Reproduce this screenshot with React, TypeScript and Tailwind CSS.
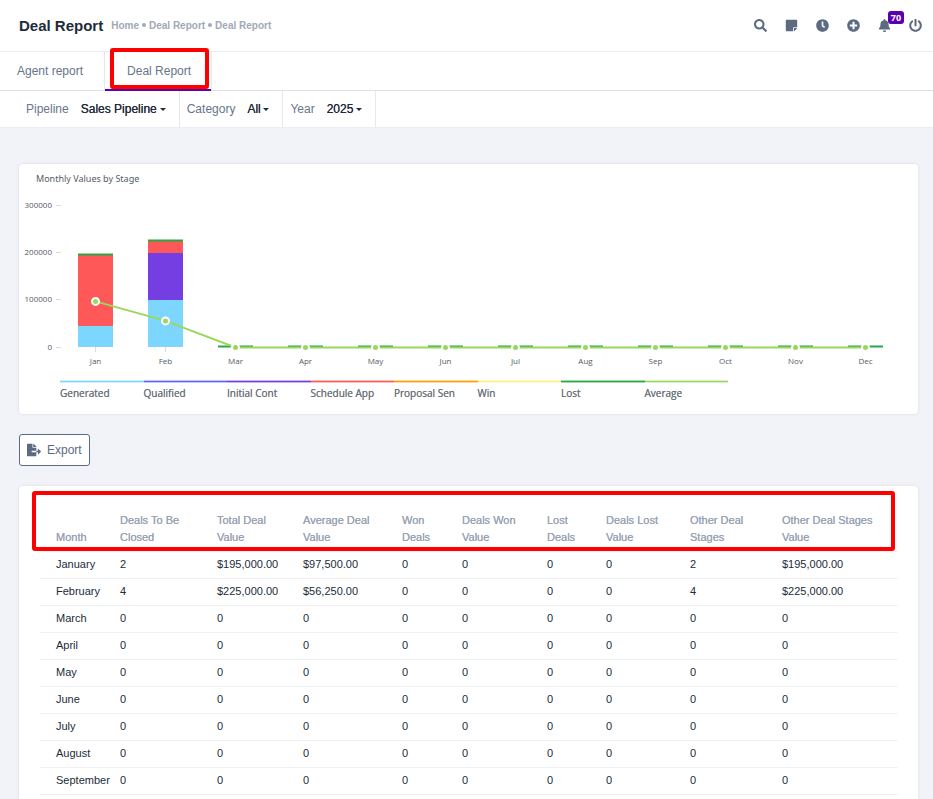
import React from "react";
import {
  FaSearch,
  FaStickyNote,
  FaClock,
  FaPlusCircle,
  FaBell,
  FaPowerOff,
  FaFileExport,
} from "react-icons/fa";

const months = ["Jan", "Feb", "Mar", "Apr", "May", "Jun", "Jul", "Aug", "Sep", "Oct", "Nov", "Dec"];
const averages = [97500, 56250, 0, 0, 0, 0, 0, 0, 0, 0, 0, 0];

const legend = [
  { name: "Generated", line: "bg-[#7cd6fd] border-[#d0f0fe]" },
  { name: "Qualified", line: "bg-[#5e64ff] border-[#c2c4ff]" },
  { name: "Initial Cont", line: "bg-[#743ee2] border-[#cab5f4]" },
  { name: "Schedule App", line: "bg-[#ff5858] border-[#ffc0c0]" },
  { name: "Proposal Sen", line: "bg-[#ffa00a] border-[#ffdba0]" },
  { name: "Win", line: "bg-[#feef72] border-[#fffad0]" },
  { name: "Lost", line: "bg-[#28a745] border-[#a6dab2]" },
  { name: "Average", line: "bg-[#98d85b] border-[#d9f1c4]" },
];

const headings = [
  ["", "Month"],
  ["Deals To Be", "Closed"],
  ["Total Deal", "Value"],
  ["Average Deal", "Value"],
  ["Won", "Deals"],
  ["Deals Won", "Value"],
  ["Lost", "Deals"],
  ["Deals Lost", "Value"],
  ["Other Deal", "Stages"],
  ["Other Deal Stages", "Value"],
];

const zeros = ["0", "0", "0", "0", "0", "0", "0", "0", "0"];
const rows = [
  ["January", "2", "$195,000.00", "$97,500.00", "0", "0", "0", "0", "2", "$195,000.00"],
  ["February", "4", "$225,000.00", "$56,250.00", "0", "0", "0", "0", "4", "$225,000.00"],
  ["March", ...zeros],
  ["April", ...zeros],
  ["May", ...zeros],
  ["June", ...zeros],
  ["July", ...zeros],
  ["August", ...zeros],
  ["September", ...zeros],
];

function Filter({ id, label, value, lead }: { id: string; label: string; value: string; lead: string }) {
  return (
    <div className={`flex items-center border-r border-[#e6e8f0] pr-[13px] ${lead}`}>
      <label htmlFor={id} className="mr-3 text-[#67758d]">
        {label}
      </label>
      <select
        id={id}
        className="appearance-none bg-transparent text-[#212b3a] outline-none [text-shadow:0_0_0_currentColor]"
      >
        <option>{value}</option>
      </select>
      <svg className="pointer-events-none ml-[2px] h-[3px] w-[6px]" viewBox="0 0 6 3" aria-hidden="true">
        <path d="M0 0h6L3 3z" fill="#212b3a" />
      </svg>
    </div>
  );
}

function Chart() {
  const x = (i: number) => 95.5 + i * 70;
  const y = (v: number) => 347.5 - (v / 100000) * 47.3;
  return (
    <svg viewBox="19 194 899 176" className="block w-full" role="img" aria-label="Monthly values by stage">
      {[0, 100000, 200000, 300000].map((v) => (
        <g key={v}>
          <line x1="56" x2="61" y1={Math.round(y(v)) - 0.5} y2={Math.round(y(v)) - 0.5} stroke="#dadada" />
          <text x="52" y={Math.round(y(v)) + 2} fontSize="8" textAnchor="end" fill="#555b66">
            {v}
          </text>
        </g>
      ))}
      {months.map((m, i) => (
        <g key={m}>
          <line x1={x(i)} x2={x(i)} y1="347" y2="352" stroke="#dadada" />
          <text x={x(i)} y="364" fontSize="8" textAnchor="middle" fill="#555b66">
            {m}
          </text>
        </g>
      ))}
      <g>
        <rect x="78" y="326" width="35" height="21" fill="#7cd6fd" />
        <rect x="78" y="255" width="35" height="71" fill="#ff5858" />
        <rect x="78" y="253.5" width="35" height="2" fill="#28a745" />
        <rect x="148" y="300" width="35" height="47" fill="#7cd6fd" />
        <rect x="148" y="253" width="35" height="47" fill="#743ee2" />
        <rect x="148" y="241" width="35" height="12" fill="#ff5858" />
        <rect x="148" y="239.5" width="35" height="2" fill="#28a745" />
        {months.slice(2).map((m, i) => (
          <rect key={m} x={218 + i * 70} y="345.5" width="35" height="2" fill="#28a745" />
        ))}
      </g>
      <polyline
        points={averages.map((v, i) => `${x(i)},${y(v)}`).join(" ")}
        fill="none"
        stroke="#98d85b"
        strokeWidth="2"
      />
      {averages.map((v, i) => (
        <circle key={i} cx={x(i)} cy={y(v)} r="3.5" fill="#98d85b" stroke="#fff" strokeWidth="2" />
      ))}
    </svg>
  );
}

export default function App() {
  return (
    <div className="h-screen overflow-hidden bg-[#f2f3f8] font-['Liberation_Sans',Arial,sans-serif] text-xs text-[#67758d]">
      <header className="flex h-[52px] items-center justify-between border-b border-[#ebedf2] bg-white pr-[11px] pl-[19px]">
        <div className="flex items-center">
          <h1 className="text-[15px] leading-5 font-bold text-[#212b3a]">Deal Report</h1>
          <nav aria-label="Breadcrumb" className="ml-2 flex items-center gap-[3px] text-[10px] font-bold text-[#a1a8b8]">
            <a href="#home">Home</a>
            <span className="size-1 rounded-full bg-[#a1a8b8]" />
            <a href="#deal">Deal Report</a>
            <span className="size-1 rounded-full bg-[#a1a8b8]" />
            <a href="#report">Deal Report</a>
          </nav>
        </div>
        <div className="flex items-center gap-[18px] text-[13px] text-[#5d6b82]">
          <button aria-label="Search"><FaSearch /></button>
          <button aria-label="Notes"><FaStickyNote /></button>
          <button aria-label="History"><FaClock /></button>
          <button aria-label="Add"><FaPlusCircle /></button>
          <button aria-label="Notifications" className="relative">
            <FaBell />
            <span className="absolute -top-2 left-[10px] flex h-[13px] w-4 items-center justify-center rounded-[3px] bg-[#5a00ad] font-['Open_Sans',sans-serif] text-[9px] font-bold text-white">
              70
            </span>
          </button>
          <button aria-label="Log out"><FaPowerOff /></button>
        </div>
      </header>

      <nav aria-label="Reports" className="flex h-[39px] border-b border-[#dfe1e8] bg-white">
        <a href="#agent" className="flex items-center border-r border-[#e6e8f0] pr-[21px] pl-[17px]">
          Agent report
        </a>
        <a href="#deals" className="relative flex items-center border-r border-[#e6e8f0] pr-5 pl-[22px]">
          Deal Report
          <span className="absolute inset-x-0 -bottom-px h-[2px] bg-[#5a00ad]" />
          <span className="absolute -top-1 right-[2px] bottom-px left-[5px] rounded-[3px] border-4 border-[#fe0000]" />
        </a>
      </nav>

      <div className="flex h-[37px] border-b border-[#ebedf2] bg-white">
        <Filter id="pipeline" label="Pipeline" value="Sales Pipeline" lead="pl-[26px]" />
        <Filter id="category" label="Category" value="All" lead="pl-[7px]" />
        <Filter id="year" label="Year" value="2025" lead="pl-[7px]" />
      </div>

      <main className="pt-9 pr-[15px] pl-[19px]">
        <section className="h-[250px] rounded-[4px] bg-white font-['Open_Sans',sans-serif] shadow-[0_0_3px_rgba(82,63,145,0.15)]">
          <h2 className="h-[30px] pt-2 pl-[17px] font-['Noto_Sans',sans-serif] text-[9px] leading-[14px] text-[#555b66]">
            Monthly Values by Stage
          </h2>
          <Chart />
          <ul className="mt-[10px] ml-[41px] grid w-[668px] grid-cols-8 text-[10px] leading-[14px] text-[#6c757d] [text-shadow:0_0_0_currentColor]">
            {legend.map((item) => (
              <li key={item.name}>
                <span className={`block h-[3px] border-y ${item.line}`} />
                <span className="mt-[3px] block">{item.name}</span>
              </li>
            ))}
          </ul>
        </section>

        <button className="mt-5 flex h-8 items-center gap-[6px] rounded-[3px] border border-[#5d6b82] bg-white px-[7px] text-[#5d6b82]">
          <FaFileExport className="size-[14px]" />
          Export
        </button>

        <section className="relative mt-5 rounded-[4px] bg-white pt-[21px] pr-5 pb-10 pl-[21px] shadow-[0_0_3px_rgba(82,63,145,0.15)]">
          <table className="w-full table-fixed text-left text-[11px] text-[#212b3a]">
            <colgroup>
              <col className="w-[80px]" />
              <col className="w-[97px]" />
              <col className="w-[86px]" />
              <col className="w-[99px]" />
              <col className="w-[60px]" />
              <col className="w-[85px]" />
              <col className="w-[59px]" />
              <col className="w-[84px]" />
              <col className="w-[92px]" />
              <col />
            </colgroup>
            <thead>
              <tr className="h-11 border-b border-[#f0f1f5] align-bottom leading-[17px] text-[#99a3b5] [text-shadow:0_0_0_currentColor]">
                {headings.map(([top, bottom], i) => (
                  <th key={i} scope="col" className="pb-[5px] font-normal first:pl-4">
                    {top && <span className="block">{top}</span>}
                    <span className="block">{bottom}</span>
                  </th>
                ))}
              </tr>
            </thead>
            <tbody>
              {rows.map((row) => (
                <tr key={row[0]} className="h-[27px] border-b border-[#f0f1f5]">
                  {row.map((cell, i) => (
                    <td key={i} className="first:pl-4">
                      {cell}
                    </td>
                  ))}
                </tr>
              ))}
            </tbody>
          </table>
          <span className="absolute top-[5px] right-[23px] left-[13px] h-[60px] rounded-[3px] border-4 border-[#fe0000]" />
        </section>
      </main>
    </div>
  );
}
